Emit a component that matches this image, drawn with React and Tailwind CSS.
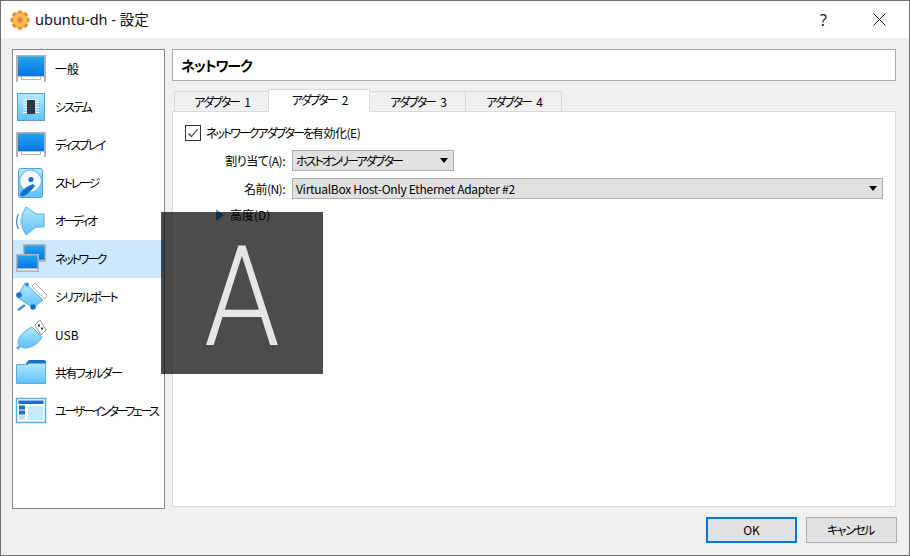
import { useState } from "react";

function Screen({ y = 0, h = 27 }) {
  return (
    <g>
      <rect x="1" y={y} width="30" height={h} fill="#b0b4b8" />
      <rect x="3" y={y + 1.5} width="26" height={h - 7} fill="url(#blue)" />
      <rect x="3" y={y + h - 5.5} width="26" height="5.500" fill="#fff" />
      <path d={`M6.500 ${y + h - 5.500}v3h19v-3`} fill="none" stroke="#b0b4b8" />
    </g>
  );
}

const icons = {
  general: <Screen y={2} h={27} />,
  system: (
    <g>
      <rect x="2.500" y="2.500" width="27" height="27" fill="url(#light)" stroke="#4f9fdc" />
      <path d="M8 9h16M8 11.500h16M8 14h16M8 16.500h16M8 19h16M8 21.500h16" stroke="#fff" strokeWidth="1.200" />
      <rect x="12" y="9" width="8" height="14" rx="0.500" fill="#2f3a44" />
    </g>
  ),
  display: <Screen y={3} h={25} />,
  storage: (
    <g>
      <rect x="3.500" y="1.500" width="24" height="29" rx="2" fill="url(#light)" stroke="#4f9fdc" />
      <circle cx="15.500" cy="14" r="11" fill="#f2faff" stroke="#6cc0f2" strokeWidth="1.200" />
      <circle cx="16" cy="12.500" r="2.600" fill="#1472c8" />
      <path d="M5 27c1-3 7-8 13-10l2 2c-3 4-7 8-11 10-2 1-4 0-4-2z" fill="#1472c8" />
    </g>
  ),
  audio: (
    <g>
      <path d="M7 10l4-8 10 7h8v13h-8l-10 8-4-8z" fill="url(#light)" stroke="#57aee8" strokeLinejoin="round" />
      <path d="M3.500 9c-2.500 4-2.500 11 0 15" fill="none" stroke="#3b8edb" strokeWidth="1.300" />
      <path d="M6 13v7" stroke="#7fc6f2" strokeWidth="1.200" />
    </g>
  ),
  network: (
    <g>
      <rect x="8" y="1" width="23" height="18" fill="#aeb4b8" />
      <rect x="9.500" y="2.500" width="20" height="14" fill="url(#blue)" />
      <rect x="1" y="11" width="23" height="18" fill="#aeb4b8" />
      <rect x="2.500" y="12.500" width="20" height="13" fill="url(#blue)" />
      <rect x="2.500" y="25.500" width="20" height="2" fill="#e8eaec" />
    </g>
  ),
  serial: (
    <g>
      <path d="M20 2l12 12-2 4L17 5z" fill="#fff" stroke="#a8a8a8" />
      <path d="M10 2l18 17-10 8L2 16z" fill="url(#light)" stroke="#57aee8" strokeLinejoin="round" />
      <circle cx="4" cy="14" r="2.800" fill="#1472c8" />
      <circle cx="18" cy="26" r="2.800" fill="#1472c8" />
      <circle cx="12" cy="3.500" r="2" fill="#3d8fd8" />
      <path d="M10 24l-7 5" stroke="#3d8fd8" strokeWidth="2.500" />
    </g>
  ),
  usb: (
    <g>
      <path d="M20 6l5-5 6 10-5 5z" fill="#fff" stroke="#9c9c9c" strokeLinejoin="round" />
      <rect x="23" y="5.500" width="2" height="2" fill="#333" />
      <rect x="26" y="8.500" width="2" height="2" fill="#333" />
      <path d="M17 8l10 10-2 3c-3 4-9 8-15 8-3 0-7-3-7-6 0-6 8-12 14-15z" fill="url(#light)" stroke="#57aee8" />
      <path d="M5 27l-3 3" stroke="#57aee8" strokeWidth="2.500" />
    </g>
  ),
  folder: (
    <g>
      <path d="M11 6l3-3h15c1 0 2 1 2 2v4H11z" fill="#1e6fc4" />
      <path d="M1.500 7.500h11l2-1h16v20h-29z" fill="url(#light)" stroke="#57aee8" />
    </g>
  ),
  ui: (
    <g>
      <rect x="1.500" y="3.500" width="29" height="24" fill="#fff" stroke="#57aee8" strokeWidth="1.500" />
      <rect x="3.500" y="5.500" width="25" height="3.500" fill="#1472c8" />
      <rect x="4" y="10.500" width="6" height="4" fill="#1472c8" />
      <rect x="4" y="15.500" width="6" height="4" fill="#1472c8" />
      <rect x="4" y="20.500" width="6" height="4" fill="#b5def8" />
      <rect x="13" y="11" width="15" height="14" fill="#c5e9fd" />
    </g>
  ),
};

const items = [
  { id: "general", label: "一般", track: "tracking-[0px]" },
  { id: "system", label: "システム", track: "tracking-[-2px]" },
  { id: "display", label: "ディスプレイ", track: "tracking-[-2.2px]" },
  { id: "storage", label: "ストレージ", track: "tracking-[-2.2px]" },
  { id: "audio", label: "オーディオ", track: "tracking-[-2.6px]" },
  { id: "network", label: "ネットワーク", track: "tracking-[-2.2px]" },
  { id: "serial", label: "シリアルポート", track: "tracking-[-2px]" },
  { id: "usb", label: "USB", track: "tracking-[0px]" },
  { id: "folder", label: "共有フォルダー", track: "tracking-[-1.600px]" },
  { id: "ui", label: "ユーザーインターフェース", track: "tracking-[-2.400px]" },
];

function Combo({ children, className, track }) {
  return (
    <div className={"flex h-[21px] items-center justify-between border border-[#adadad] bg-[#e1e1e1] pl-[3px] pr-[5px] " + className}>
      <span className={track}>{children}</span>
      <span className="h-0 w-0 border-x-[4px] border-t-[5px] border-x-transparent border-t-black" />
    </div>
  );
}

export default function App() {
  const [tab, setTab] = useState(1);
  const tabs = [
    ["アダプター 1", "w-[95px]"],
    ["アダプター 2", "w-[102px]"],
    ["アダプター 3", "w-[97px]"],
    ["アダプター 4", "w-[97px]"],
  ];

  return (
    <div
      lang="ja"
      className="relative flex h-[556px] w-[910px] flex-col overflow-hidden border border-[#6e6e6e] bg-[#f0f0f0] text-[12px] leading-none text-black [font-family:'Noto_Sans_CJK_JP','Noto_Sans',sans-serif] [font-feature-settings:'palt']"
    >
      <svg width="0" height="0" className="absolute">
        <defs>
          <linearGradient id="blue" x1="0" y1="0" x2="0" y2="1">
            <stop offset="0" stopColor="#26a5ee" />
            <stop offset="1" stopColor="#0474e6" />
          </linearGradient>
          <linearGradient id="light" x1="0" y1="0" x2="0" y2="1">
            <stop offset="0" stopColor="#b5e8ff" />
            <stop offset="1" stopColor="#5cc1f8" />
          </linearGradient>
        </defs>
      </svg>

      {/* title bar */}
      <div className="flex h-[37px] shrink-0 items-center bg-white pl-[9px]">
        <svg width="20" height="20" viewBox="0 0 20 20">
          <g fill="#ee8f2c">
            <circle cx="10" cy="2.800" r="2.600" />
            <circle cx="10" cy="17.200" r="2.600" />
            <circle cx="2.800" cy="10" r="2.600" />
            <circle cx="17.200" cy="10" r="2.600" />
            <circle cx="4.900" cy="4.900" r="2.600" />
            <circle cx="15.100" cy="4.900" r="2.600" />
            <circle cx="4.900" cy="15.100" r="2.600" />
            <circle cx="15.100" cy="15.100" r="2.600" />
          </g>
          <circle cx="10" cy="10" r="7" fill="#f8bd55" />
          <circle cx="10" cy="10" r="3.200" fill="#ee9a3c" />
          <circle cx="10" cy="10" r="1.200" fill="#d9742a" />
        </svg>
        <span className="ml-[5px] text-[14.500px] text-[#111] [font-family:'Noto_Sans','Noto_Sans_CJK_JP',sans-serif]">ubuntu-dh - 設定</span>
        <div className="ml-auto flex items-center">
          <span className="mr-[46px] text-[16px] text-[#222] [font-family:'Noto_Sans',sans-serif]">?</span>
          <svg width="13" height="13" viewBox="0 0 13 13" className="mr-[23px]">
            <path d="M0.500 0.500l12 12M12.500 0.500l-12 12" stroke="#222" strokeWidth="1" fill="none" />
          </svg>
        </div>
      </div>

      {/* body */}
      <div className="flex h-[469px] shrink-0 pl-[11px] pr-[13px] pt-[11px]">
        <div className="h-[460px] w-[153px] shrink-0 overflow-hidden border border-[#828790] bg-white">
          {items.map((it) => (
            <div key={it.id} className={"flex h-[38px] items-center pl-[2px] " + (it.id === "network" ? "bg-[#cce8ff]" : "")}>
              <svg width="32" height="32" viewBox="0 0 32 32" className="shrink-0">
                {icons[it.id]}
              </svg>
              <span className={"ml-[8px] whitespace-nowrap " + it.track}>{it.label}</span>
            </div>
          ))}
        </div>

        <div className="ml-[7px] flex min-w-0 flex-1 flex-col">
          <div className="flex h-[32px] shrink-0 items-center border border-[#adadad] bg-white pl-[8px] text-[14px] font-bold tracking-[-1px]">ネットワーク</div>

          <div className="mt-[8px] flex h-[22px] shrink-0 items-end pl-[2px]">
            {tabs.map(([label, w], i) => (
              <button
                key={label}
                onClick={() => setTab(i)}
                className={
                  "flex items-center justify-center border border-[#d9d9d9] whitespace-nowrap tracking-[-2.200px] [word-spacing:5px] " + w + " " +
                  (i > 0 ? "-ml-px " : "") +
                  (tab === i ? "relative z-10 -mb-px h-[23px] border-b-0 bg-white pb-[2px]" : "h-[20px] border-b-0 bg-[#f0f0f0]")
                }
              >
                {label}
              </button>
            ))}
          </div>

          <div className="h-[397px] border border-[#d9d9d9] bg-white pl-[12px] pt-[12px]">
            <div className="flex h-[17px] items-center">
              <span className="flex h-[16px] w-[16px] items-center justify-center border border-[#333] bg-white">
                <svg width="12" height="12" viewBox="0 0 12 12">
                  <path d="M1.500 6.500l3 3 6-7.500" fill="none" stroke="#444" strokeWidth="1.200" />
                </svg>
              </span>
              <span className="ml-[5px] whitespace-nowrap">
                <span className="tracking-[-2px]">ネットワークアダプターを</span>
                <span className="tracking-[-0.5px]">有効化(E)</span>
              </span>
            </div>

            <div className="mt-[9px] grid grid-cols-[100px_1fr] items-center gap-x-[7px] gap-y-[7px] pr-[12px]">
              <span className="text-right tracking-[-0.5px]">割り当て(A):</span>
              <Combo className="w-[162px]" track="tracking-[-2px]">ホストオンリーアダプター</Combo>
              <span className="text-right tracking-[-0.5px]">名前(N):</span>
              <Combo className="w-[591px]" track="tracking-[-0.28px]">VirtualBox Host-Only Ethernet Adapter #2</Combo>
            </div>

            <div className="ml-[31px] mt-[9px] flex h-[14px] items-center">
              <span className="h-0 w-0 border-y-[6px] border-l-[8px] border-y-transparent border-l-[#4f9fdc]" />
              <span className="ml-[6px]">高度(D)</span>
            </div>
          </div>
        </div>
      </div>

      {/* buttons */}
      <div className="flex flex-1 items-start justify-end gap-[9px] pr-[12px] pt-[10px]">
        <button className="h-[26px] w-[91px] border-2 border-[#0078d7] bg-[#e1e1e1]">OK</button>
        <button className="h-[26px] w-[91px] border border-[#adadad] bg-[#e1e1e1] pr-[2px] tracking-[-1.500px]">キャンセル</button>
      </div>

      {/* key overlay */}
      <div className="absolute left-[160px] top-[211px] flex h-[162px] w-[162px] items-center justify-center bg-black/70 pt-[8px] text-[140px] font-light text-[#e6e6e6] [font-family:Roboto,sans-serif]">
        <span className="inline-block scale-x-[0.86]">A</span>
      </div>
    </div>
  );
}
